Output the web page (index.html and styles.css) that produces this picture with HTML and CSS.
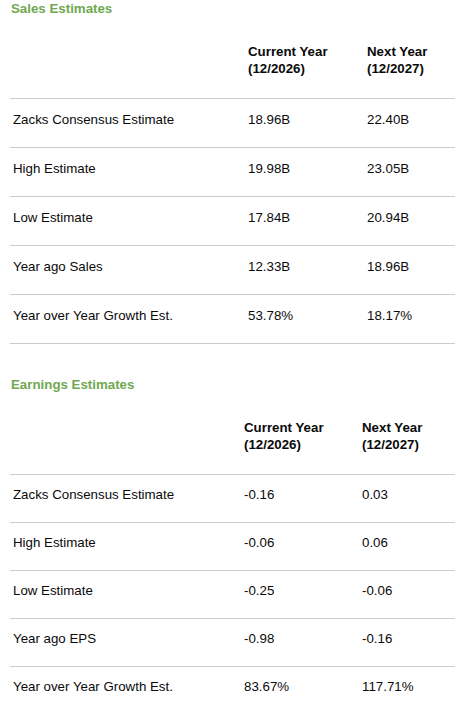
FILE: index.html
```html
<!DOCTYPE html>
<html lang="en">
<head>
    <meta charset="UTF-8">
    <meta name="viewport" content="width=device-width, initial-scale=1.0">
    <title>Estimates</title>
    <link rel="stylesheet" href="styles.css">
</head>
<body>
    <div class="container">
        <section class="estimates sales">
            <h2>Sales Estimates</h2>
            <table>
                <colgroup>
                    <col class="col-label">
                    <col class="col-current">
                    <col class="col-next">
                </colgroup>
                <thead>
                    <tr>
                        <th></th>
                        <th>Current Year<br>(12/2026)</th>
                        <th>Next Year<br>(12/2027)</th>
                    </tr>
                </thead>
                <tbody>
                    <tr><td>Zacks Consensus Estimate</td><td>18.96B</td><td>22.40B</td></tr>
                    <tr><td>High Estimate</td><td>19.98B</td><td>23.05B</td></tr>
                    <tr><td>Low Estimate</td><td>17.84B</td><td>20.94B</td></tr>
                    <tr><td>Year ago Sales</td><td>12.33B</td><td>18.96B</td></tr>
                    <tr><td>Year over Year Growth Est.</td><td>53.78%</td><td>18.17%</td></tr>
                </tbody>
            </table>
        </section>

        <section class="estimates earnings">
            <h2>Earnings Estimates</h2>
            <table>
                <colgroup>
                    <col class="col-label">
                    <col class="col-current">
                    <col class="col-next">
                </colgroup>
                <thead>
                    <tr>
                        <th></th>
                        <th>Current Year<br>(12/2026)</th>
                        <th>Next Year<br>(12/2027)</th>
                    </tr>
                </thead>
                <tbody>
                    <tr><td>Zacks Consensus Estimate</td><td>-0.16</td><td>0.03</td></tr>
                    <tr><td>High Estimate</td><td>-0.06</td><td>0.06</td></tr>
                    <tr><td>Low Estimate</td><td>-0.25</td><td>-0.06</td></tr>
                    <tr><td>Year ago EPS</td><td>-0.98</td><td>-0.16</td></tr>
                    <tr><td>Year over Year Growth Est.</td><td>83.67%</td><td>117.71%</td></tr>
                </tbody>
            </table>
        </section>
    </div>
</body>
</html>
```

FILE: styles.css
```css
body {
    font-family: Arial, "Liberation Sans", Helvetica, sans-serif;
    font-size: 13.3px;
    color: #0a0a0a;
    background-color: #ffffff;
    margin: 0;
    padding: 0;
}

.container {
    padding: 1px 0 0 10px;
}

h2 {
    font-size: 13.3px;
    line-height: 16px;
    font-weight: bold;
    color: #6fa84f;
    margin: 0;
    padding-left: 1px;
}

.earnings {
    margin-top: 33px;
}

table {
    width: 445px;
    border-collapse: collapse;
    table-layout: fixed;
}

th, td {
    text-align: left;
    padding: 0 0 0 3px;
    border-bottom: 1px solid #cccccc;
}

th {
    font-weight: bold;
    line-height: 17px;
    padding-top: 26px;
    padding-bottom: 21px;
}

td {
    line-height: 16px;
    padding-top: 13px;
    padding-bottom: 19px;
}

.earnings td {
    padding-top: 12px;
    padding-bottom: 19px;
}

.sales .col-label {
    width: 235px;
}

.sales .col-current {
    width: 119px;
}

.earnings .col-label {
    width: 231px;
}

.earnings .col-current {
    width: 118px;
}
```
